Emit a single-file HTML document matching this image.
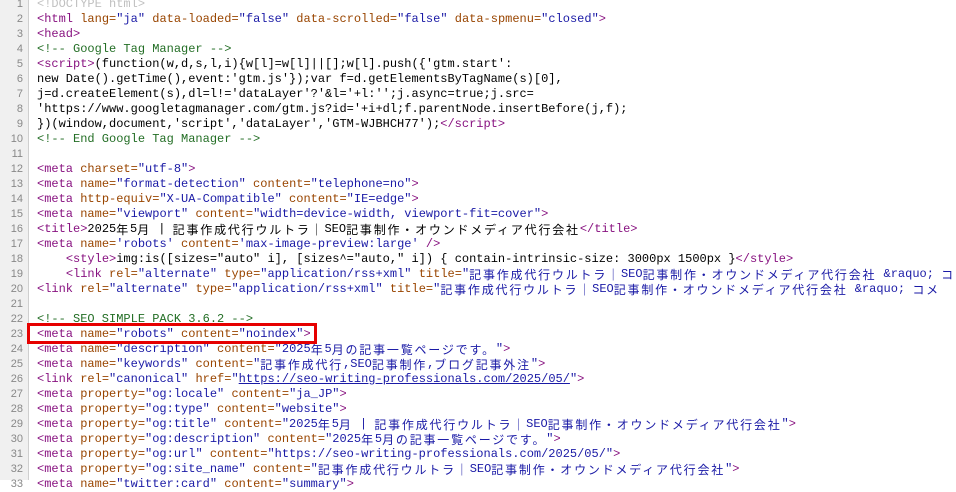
<!DOCTYPE html>
<html><head><meta charset="utf-8"><style>
body{margin:0;width:956px;height:480px;overflow:hidden;background:#fff;position:relative;font-family:"Liberation Mono","Noto Sans CJK JP",monospace;font-size:12px;}
#g{position:absolute;left:0;top:0;width:28px;height:480px;background:#f0f0f0;border-right:1px solid #cfcfcf;}
#w{position:absolute;left:0;top:-3.5px;width:956px;}
.l{height:15px;line-height:15px;white-space:pre;position:relative;overflow:visible;}
.n{position:absolute;left:0;top:0;width:23px;text-align:right;color:#888;font-family:"Liberation Sans",sans-serif;font-size:11px;}
.x{position:absolute;left:37px;top:0;height:15px;color:#000;}
.t{color:#881280}.a{color:#994500}.v{color:#1a1aa6}.c{color:#236e25}.d{color:#c0c0c0}
.u{text-decoration:underline}
i{font-style:normal;font-family:"Noto Sans CJK JP",sans-serif;letter-spacing:1.8px;display:inline-block;height:15px;line-height:15px;vertical-align:top;overflow:visible;}
#box{position:absolute;left:27px;top:323px;width:284px;height:15px;border:3px solid #e60000;}
</style></head><body>
<div id="g"></div>
<div id="w">
<div class="l"><span class="n">1</span><span class="x"><span class="d">&lt;!DOCTYPE html&gt;</span></span></div>
<div class="l"><span class="n">2</span><span class="x"><span class="t">&lt;html </span><span class="a">lang=</span><span class="v">"ja"</span><span class="a"> data-loaded=</span><span class="v">"false"</span><span class="a"> data-scrolled=</span><span class="v">"false"</span><span class="a"> data-spmenu=</span><span class="v">"closed"</span><span class="t">&gt;</span></span></div>
<div class="l"><span class="n">3</span><span class="x"><span class="t">&lt;head&gt;</span></span></div>
<div class="l"><span class="n">4</span><span class="x"><span class="c">&lt;!-- Google Tag Manager --&gt;</span></span></div>
<div class="l"><span class="n">5</span><span class="x"><span class="t">&lt;script&gt;</span>(function(w,d,s,l,i){w[l]=w[l]||[];w[l].push({'gtm.start':</span></div>
<div class="l"><span class="n">6</span><span class="x">new Date().getTime(),event:'gtm.js'});var f=d.getElementsByTagName(s)[0],</span></div>
<div class="l"><span class="n">7</span><span class="x">j=d.createElement(s),dl=l!='dataLayer'?'&amp;l='+l:'';j.async=true;j.src=</span></div>
<div class="l"><span class="n">8</span><span class="x">'https://www.googletagmanager.com/gtm.js?id='+i+dl;f.parentNode.insertBefore(j,f);</span></div>
<div class="l"><span class="n">9</span><span class="x">})(window,document,'script','dataLayer','GTM-WJBHCH77');<span class="t">&lt;/script&gt;</span></span></div>
<div class="l"><span class="n">10</span><span class="x"><span class="c">&lt;!-- End Google Tag Manager --&gt;</span></span></div>
<div class="l"><span class="n">11</span><span class="x"></span></div>
<div class="l"><span class="n">12</span><span class="x"><span class="t">&lt;meta </span><span class="a">charset=</span><span class="v">"utf-8"</span><span class="t">&gt;</span></span></div>
<div class="l"><span class="n">13</span><span class="x"><span class="t">&lt;meta </span><span class="a">name=</span><span class="v">"format-detection"</span><span class="a"> content=</span><span class="v">"telephone=no"</span><span class="t">&gt;</span></span></div>
<div class="l"><span class="n">14</span><span class="x"><span class="t">&lt;meta </span><span class="a">http-equiv=</span><span class="v">"X-UA-Compatible"</span><span class="a"> content=</span><span class="v">"IE=edge"</span><span class="t">&gt;</span></span></div>
<div class="l"><span class="n">15</span><span class="x"><span class="t">&lt;meta </span><span class="a">name=</span><span class="v">"viewport"</span><span class="a"> content=</span><span class="v">"width=device-width, viewport-fit=cover"</span><span class="t">&gt;</span></span></div>
<div class="l"><span class="n">16</span><span class="x"><span class="t">&lt;title&gt;</span>2025<i>年</i>5<i>月</i> | <i>記事作成代行ウルトラ｜</i>SEO<i>記事制作・オウンドメディア代行会社</i><span class="t">&lt;/title&gt;</span></span></div>
<div class="l"><span class="n">17</span><span class="x"><span class="t">&lt;meta </span><span class="a">name=</span><span class="v">'robots'</span><span class="a"> content=</span><span class="v">'max-image-preview:large'</span><span class="t"> /&gt;</span></span></div>
<div class="l"><span class="n">18</span><span class="x">    <span class="t">&lt;style&gt;</span>img:is([sizes="auto" i], [sizes^="auto," i]) { contain-intrinsic-size: 3000px 1500px }<span class="t">&lt;/style&gt;</span></span></div>
<div class="l"><span class="n">19</span><span class="x">    <span class="t">&lt;link </span><span class="a">rel=</span><span class="v">"alternate"</span><span class="a"> type=</span><span class="v">"application/rss+xml"</span><span class="a"> title=</span><span class="v">"<i>記事作成代行ウルトラ｜</i>SEO<i>記事制作・オウンドメディア代行会社</i> &amp;raquo; <i>コメ</i></span></span></div>
<div class="l"><span class="n">20</span><span class="x"><span class="t">&lt;link </span><span class="a">rel=</span><span class="v">"alternate"</span><span class="a"> type=</span><span class="v">"application/rss+xml"</span><span class="a"> title=</span><span class="v">"<i>記事作成代行ウルトラ｜</i>SEO<i>記事制作・オウンドメディア代行会社</i> &amp;raquo; <i>コメ</i></span></span></div>
<div class="l"><span class="n">21</span><span class="x"></span></div>
<div class="l"><span class="n">22</span><span class="x"><span class="c">&lt;!-- SEO SIMPLE PACK 3.6.2 --&gt;</span></span></div>
<div class="l"><span class="n">23</span><span class="x"><span class="t">&lt;meta </span><span class="a">name=</span><span class="v">"robots"</span><span class="a"> content=</span><span class="v">"noindex"</span><span class="t">&gt;</span></span></div>
<div class="l"><span class="n">24</span><span class="x"><span class="t">&lt;meta </span><span class="a">name=</span><span class="v">"description"</span><span class="a"> content=</span><span class="v">"2025<i>年</i>5<i>月の記事一覧ページです。</i>"</span><span class="t">&gt;</span></span></div>
<div class="l"><span class="n">25</span><span class="x"><span class="t">&lt;meta </span><span class="a">name=</span><span class="v">"keywords"</span><span class="a"> content=</span><span class="v">"<i>記事作成代行</i>,SEO<i>記事制作</i>,<i>ブログ記事外注</i>"</span><span class="t">&gt;</span></span></div>
<div class="l"><span class="n">26</span><span class="x"><span class="t">&lt;link </span><span class="a">rel=</span><span class="v">"canonical"</span><span class="a"> href=</span><span class="v">"<span class="u">https://seo-writing-professionals.com/2025/05/</span>"</span><span class="t">&gt;</span></span></div>
<div class="l"><span class="n">27</span><span class="x"><span class="t">&lt;meta </span><span class="a">property=</span><span class="v">"og:locale"</span><span class="a"> content=</span><span class="v">"ja_JP"</span><span class="t">&gt;</span></span></div>
<div class="l"><span class="n">28</span><span class="x"><span class="t">&lt;meta </span><span class="a">property=</span><span class="v">"og:type"</span><span class="a"> content=</span><span class="v">"website"</span><span class="t">&gt;</span></span></div>
<div class="l"><span class="n">29</span><span class="x"><span class="t">&lt;meta </span><span class="a">property=</span><span class="v">"og:title"</span><span class="a"> content=</span><span class="v">"2025<i>年</i>5<i>月</i> | <i>記事作成代行ウルトラ｜</i>SEO<i>記事制作・オウンドメディア代行会社</i>"</span><span class="t">&gt;</span></span></div>
<div class="l"><span class="n">30</span><span class="x"><span class="t">&lt;meta </span><span class="a">property=</span><span class="v">"og:description"</span><span class="a"> content=</span><span class="v">"2025<i>年</i>5<i>月の記事一覧ページです。</i>"</span><span class="t">&gt;</span></span></div>
<div class="l"><span class="n">31</span><span class="x"><span class="t">&lt;meta </span><span class="a">property=</span><span class="v">"og:url"</span><span class="a"> content=</span><span class="v">"https://seo-writing-professionals.com/2025/05/"</span><span class="t">&gt;</span></span></div>
<div class="l"><span class="n">32</span><span class="x"><span class="t">&lt;meta </span><span class="a">property=</span><span class="v">"og:site_name"</span><span class="a"> content=</span><span class="v">"<i>記事作成代行ウルトラ｜</i>SEO<i>記事制作・オウンドメディア代行会社</i>"</span><span class="t">&gt;</span></span></div>
<div class="l"><span class="n">33</span><span class="x"><span class="t">&lt;meta </span><span class="a">name=</span><span class="v">"twitter:card"</span><span class="a"> content=</span><span class="v">"summary"</span><span class="t">&gt;</span></span></div>
</div>
<div id="box"></div>
</body></html>
